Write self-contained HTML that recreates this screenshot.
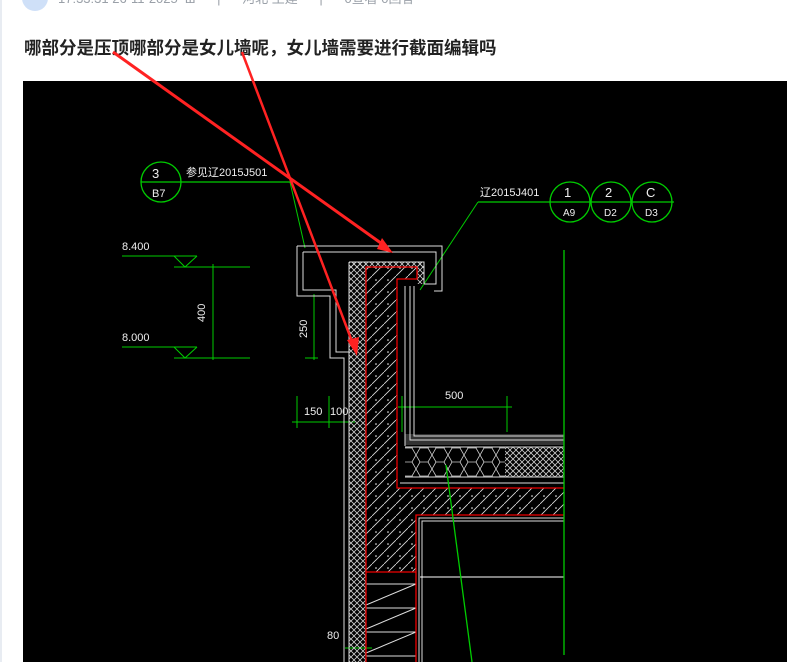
<!DOCTYPE html>
<html><head><meta charset="utf-8"><style>
html,body{margin:0;padding:0;width:787px;height:662px;overflow:hidden;background:#fff;font-family:"Liberation Sans","Noto Sans CJK SC",sans-serif;}
.strip{position:absolute;left:0;top:0;width:2px;height:662px;background:#e8ecf2}
.av{position:absolute;left:22px;top:-15px;width:26px;height:26px;border-radius:50%;background:#cfe0f8}
.meta{position:absolute;top:-12px;left:58px;font-size:13px;color:#9aa0a8;white-space:nowrap}
.title{position:absolute;left:24px;top:35px;font-size:17.5px;font-weight:bold;color:#222;white-space:nowrap}
svg{position:absolute;left:0;top:0}
</style></head><body>
<div class="strip"></div>
<div class="av"></div>
<div class="meta">17:33:31 26-11-2025 &nbsp;ш &nbsp;&nbsp;&nbsp;&nbsp;&nbsp;| &nbsp;&nbsp;&nbsp;&nbsp;&nbsp;河北 土建 &nbsp;&nbsp;&nbsp;&nbsp;&nbsp;| &nbsp;&nbsp;&nbsp;&nbsp;&nbsp;0查看 0回答</div>
<div class="title">哪部分是压顶哪部分是女儿墙呢，女儿墙需要进行截面编辑吗</div>
<svg width="787" height="662" viewBox="0 0 787 662">
<defs>
<pattern id="cross" width="6" height="6" patternUnits="userSpaceOnUse"><path d="M0 0L6 6M6 0L0 6" stroke="#ccc" stroke-width="0.8"/></pattern>
<pattern id="diag" width="12" height="12" patternUnits="userSpaceOnUse"><path d="M0 12L12 0" stroke="#ddd" stroke-width="0.8"/><circle cx="4" cy="4" r="0.8" fill="#fff"/></pattern>
<pattern id="hex" width="16" height="14" patternUnits="userSpaceOnUse"><path d="M4 0L12 0L16 7L12 14L4 14L0 7Z" fill="none" stroke="#ccc" stroke-width="0.8"/></pattern>
</defs>
<rect x="23" y="81" width="764" height="581" fill="#000"/>
<g font-family="Liberation Sans,Noto Sans CJK SC,sans-serif" fill="#eee" font-size="11">
<circle cx="161" cy="182" r="20" fill="none" stroke="#0c0" stroke-width="1.3"/>
<line x1="141" y1="182" x2="290" y2="182" stroke="#0c0" stroke-width="1.3"/>
<line x1="290" y1="182" x2="305" y2="248" stroke="#0c0"/>
<text x="152" y="178" font-size="13">3</text><text x="152" y="197" font-size="11">B7</text>
<text x="186" y="176" font-size="11">参见辽2015J501</text>
<line x1="478" y1="202" x2="674" y2="202" stroke="#0c0" stroke-width="1.3"/>
<line x1="478" y1="202" x2="420" y2="290" stroke="#0c0"/>
<circle cx="570" cy="202" r="20" fill="none" stroke="#0c0" stroke-width="1.3"/>
<circle cx="611" cy="202" r="20" fill="none" stroke="#0c0" stroke-width="1.3"/>
<circle cx="652" cy="202" r="20" fill="none" stroke="#0c0" stroke-width="1.3"/>
<text x="564" y="197" font-size="13">1</text><text x="605" y="197" font-size="13">2</text><text x="646" y="197" font-size="13">C</text>
<text x="563" y="216" font-size="10">A9</text><text x="604" y="216" font-size="10">D2</text><text x="645" y="216" font-size="10">D3</text>
<text x="480" y="196" font-size="11">辽2015J401</text>
<text x="122" y="250" font-size="11">8.400</text>
<line x1="122" y1="256" x2="197" y2="256" stroke="#0c0"/>
<path d="M174 256L185 267L197 256" fill="none" stroke="#0c0"/>
<line x1="174" y1="267" x2="250" y2="267" stroke="#0c0"/>
<text x="122" y="341" font-size="11">8.000</text>
<line x1="122" y1="347" x2="197" y2="347" stroke="#0c0"/>
<path d="M174 347L185 358L197 347" fill="none" stroke="#0c0"/>
<line x1="174" y1="358" x2="250" y2="358" stroke="#0c0"/>
<line x1="213" y1="264" x2="213" y2="360" stroke="#0c0"/>
<text transform="translate(205,322) rotate(-90)" font-size="11">400</text>
<line x1="314" y1="294" x2="314" y2="360" stroke="#0c0"/>
<line x1="305" y1="296" x2="318" y2="296" stroke="#0c0"/><line x1="305" y1="358" x2="318" y2="358" stroke="#0c0"/>
<text transform="translate(307,338) rotate(-90)" font-size="11">250</text>
<line x1="292" y1="422" x2="355" y2="422" stroke="#0c0"/>
<line x1="297" y1="396" x2="297" y2="428" stroke="#0c0"/><line x1="329" y1="396" x2="329" y2="428" stroke="#0c0"/>
<text x="304" y="415" font-size="11">150</text><text x="330" y="415" font-size="11">100</text>
<line x1="398" y1="407" x2="512" y2="407" stroke="#0c0"/>
<line x1="402" y1="396" x2="402" y2="432" stroke="#0c0"/><line x1="507" y1="396" x2="507" y2="432" stroke="#0c0"/>
<text x="445" y="399" font-size="11">500</text>
<text x="327" y="639" font-size="11">80</text>
<line x1="345" y1="648" x2="372" y2="648" stroke="#0c0"/>
</g>
<polygon points="366,267 417,267 417,279 397,279 397,488 564,488 564,515 416,515 416,572 366,572" fill="url(#diag)"/>
<rect x="349" y="262" width="17" height="400" fill="url(#cross)"/>
<rect x="349" y="262" width="75" height="6" fill="url(#cross)"/>
<rect x="417" y="262" width="7" height="22" fill="url(#cross)"/>
<rect x="405" y="447" width="100" height="30" fill="url(#hex)"/>
<rect x="505" y="447" width="59" height="30" fill="url(#cross)"/>
<rect x="405" y="434" width="159" height="11" fill="#555" opacity="0.6"/>
<g stroke="#ddd" fill="none" stroke-width="1">
<path d="M297 246L442 246L442 291L434 291"/>
<path d="M303 252L436 252L436 284L424 284"/>
<path d="M297 246L297 296L330 296L330 358L344 358L344 662"/>
<path d="M303 252L303 290L336 290L336 352L349 352"/>
<path d="M349 262L424 262L424 284"/>
<line x1="349" y1="262" x2="349" y2="662"/>
<path d="M405 286L405 446"/><path d="M410 286L410 440L564 440"/><path d="M414 286L414 436L564 436"/>
<line x1="405" y1="447" x2="564" y2="447"/><line x1="405" y1="477" x2="564" y2="477"/><line x1="400" y1="483" x2="564" y2="483"/>
<path d="M419 662L419 518L564 518"/><path d="M422 662L422 521L564 521"/>
<line x1="420" y1="577" x2="564" y2="577" stroke="#fff"/>
<path d="M366 584L416 584M366 608L416 608M366 632L416 632M366 656L416 656"/>
<path d="M366 605L416 584M366 629L416 608M366 653L416 632"/>
</g>
<g stroke="#e00" fill="none" stroke-width="1.3">
<path d="M366 662L366 267L417 267L417 279L397 279L397 488L564 488"/>
<path d="M416 662L416 515L564 515"/>
<line x1="366" y1="572" x2="416" y2="572"/>
</g>
<line x1="564" y1="250" x2="564" y2="655" stroke="#0c0" stroke-width="1.3"/>
<line x1="446" y1="465" x2="472" y2="662" stroke="#0c0" stroke-width="1.3"/>
<path d="M113 52L385 246" stroke="#f22" stroke-width="3"/>
<path d="M382 238L393 253L377 249Z" fill="#f22"/>
<path d="M242 52L353 344" stroke="#f22" stroke-width="2.5"/>
<path d="M347 340L357 356L359 337Z" fill="#f22"/>
</svg>
</body></html>
